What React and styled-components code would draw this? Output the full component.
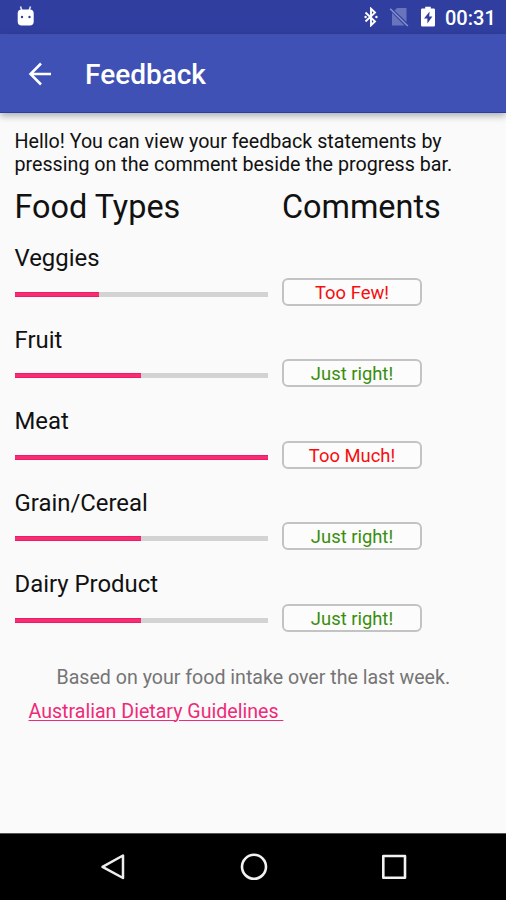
import React from "react";
import styled, { createGlobalStyle } from "styled-components";

const GlobalStyle = createGlobalStyle`
  * { box-sizing: border-box; }
  body { margin: 0; background: #fafafa; font-family: Roboto, "Noto Sans", sans-serif; }
`;

const Screen = styled.div`
  display: flex;
  flex-direction: column;
  width: 506px;
  height: 900px;
  overflow: hidden;
  background: #fafafa;
  color: #111;
`;

const StatusBar = styled.header`
  display: flex;
  align-items: center;
  flex: none;
  height: 34px;
  padding: 0 10px 0 16px;
  background: #303f9f;
  color: #fff;
`;

const StatusIcons = styled.div`
  display: flex;
  align-items: center;
  gap: 11px;
  margin-left: auto;
`;

const Clock = styled.span`
  width: 51px;
  margin: 2px 0 0 -2px;
  font-size: 20px;
  font-weight: 500;
  line-height: 34px;
  white-space: nowrap;
`;

const AppBar = styled.nav`
  display: flex;
  align-items: center;
  flex: none;
  height: 79px;
  padding-left: 28px;
  background: #3f51b5;
  border-bottom: 1px solid #2740a6;
  box-shadow: 0 3px 7px rgba(0, 0, 0, 0.3);
  color: #fff;
`;

const BackButton = styled.button`
  display: flex;
  margin-top: 1px;
  padding: 0;
  border: 0;
  background: none;
`;

const Title = styled.h1`
  margin: 4px 0 0 33px;
  font-size: 28px;
  font-weight: 500;
  line-height: 34px;
`;

const Content = styled.main`
  flex: 1;
  padding: 17px 0 0 14.5px;
`;

const Intro = styled.p`
  margin: 0;
  font-size: 19.68px;
  line-height: 23px;
  white-space: nowrap;
`;

const Columns = styled.div`
  display: grid;
  grid-template-columns: 253px 140px;
  column-gap: 14.5px;
`;

const Heading = styled.h2`
  margin: 11px 0 0;
  font-size: 32.4px;
  font-weight: 400;
  line-height: 40px;
  white-space: nowrap;
`;

const FoodRow = styled(Columns)`
  height: 81.5px;
  align-items: start;
`;

const Food = styled.div`
  padding-top: 16px;
`;

const FoodName = styled.div`
  height: 30px;
  font-size: 23.9px;
  line-height: 30px;
`;

const Track = styled.div`
  height: 5px;
  margin-top: 18.8px;
  background: #d3d3d3;
`;

const Fill = styled.div`
  height: 5px;
  background: #f62d74;
  border: solid #ef1b66;
  border-width: 1px 0;
`;

const Comment = styled.button`
  height: 28px;
  margin-top: 50.8px;
  padding: 1px 0 0;
  border: 2px solid #c3c3c3;
  border-radius: 6px;
  background: #fcfcfc;
  color: ${(p) => (p.$good ? "#388e0c" : "#f80d0d")};
  font: 400 18.4px/23px Roboto, sans-serif;
`;

const Basis = styled.p`
  margin: 31px 0 0 42px;
  font-size: 19.6px;
  line-height: 24px;
  color: #757575;
  white-space: nowrap;
`;

const GuideLink = styled.a`
  display: block;
  width: max-content;
  margin: 10px 0 0 14px;
  color: #ee2b78;
  font-size: 19.6px;
  line-height: 24px;
  text-decoration: underline;
  text-decoration-thickness: 1px;
  text-underline-offset: 2px;
  white-space: pre;
`;

const NavBar = styled.footer`
  display: flex;
  align-items: center;
  justify-content: space-between;
  flex: none;
  height: 67px;
  padding: 0 97px 0 98px;
  background: #000;
  border-top: 1px solid #555;
`;

const foods = [
  { name: "Veggies", value: 33.3, comment: "Too Few!", good: false },
  { name: "Fruit", value: 50, comment: "Just right!", good: true },
  { name: "Meat", value: 100, comment: "Too Much!", good: false },
  { name: "Grain/Cereal", value: 50, comment: "Just right!", good: true },
  { name: "Dairy Product", value: 50, comment: "Just right!", good: true },
];

export default function App() {
  return (
    <Screen>
      <GlobalStyle />
      <StatusBar>
        <svg width="20" height="24" viewBox="0 0 20 24">
          <path d="M4.500 1.500 6 6M14.500 1.500 13 6" stroke="#dfe3ff" strokeWidth="1.600" />
          <rect x="1.700" y="4.500" width="16" height="16" rx="4" fill="#fff" />
          <circle cx="6" cy="12" r="1.200" fill="#303f9f" />
          <circle cx="13.500" cy="12" r="1.200" fill="#303f9f" />
        </svg>
        <StatusIcons>
          <svg width="14" height="20" viewBox="0 0 14 20">
            <path d="M1.500 5.500 11 14.500 7 18.300V1.700L11 5.500 1.500 14.500" fill="none" stroke="#fff" strokeWidth="1.900" />
            <circle cx="1.600" cy="10" r="1.200" fill="#fff" />
            <circle cx="12.400" cy="10" r="1.200" fill="#fff" />
          </svg>
          <svg width="20" height="20" viewBox="0 0 20 20">
            <path d="M8 1H17.500V15L5.500 3.500zM3 5.700 15.500 18.500H3z" fill="#6974bc" />
            <path d="M1.200 1.800 18.800 19" stroke="#8690cd" strokeWidth="1.600" />
          </svg>
          <svg width="16" height="22" viewBox="0 0 16 22">
            <path d="M2.200 2.500h3V.800h5.600v1.700h3q1.200 0 1.200 1.200v15.600q0 1.200-1.200 1.200H2.200q-1.200 0-1.200-1.200V3.700q0-1.200 1.200-1.200z" fill="#fff" />
            <path d="M9.600 5.500 4 12.500h3.400V17.500L12.400 10.500H9.200z" fill="#303f9f" />
          </svg>
          <Clock>00:31</Clock>
        </StatusIcons>
      </StatusBar>
      <AppBar>
        <BackButton aria-label="Back">
          <svg width="24" height="24" viewBox="0 0 24 24" fill="none" stroke="#fff" strokeWidth="2.500">
            <path d="M23 12H2.500M13 1.500 2.500 12l10.500 10.500" />
          </svg>
        </BackButton>
        <Title>Feedback</Title>
      </AppBar>
      <Content>
        <Intro>
          Hello! You can view your feedback statements by
          <br />
          pressing on the comment beside the progress bar.
        </Intro>
        <Columns>
          <Heading>Food Types</Heading>
          <Heading>Comments</Heading>
        </Columns>
        {foods.map((f) => (
          <FoodRow key={f.name}>
            <Food>
              <FoodName>{f.name}</FoodName>
              <Track>
                <Fill style={{ width: `${f.value}%` }} />
              </Track>
            </Food>
            <Comment $good={f.good}>{f.comment}</Comment>
          </FoodRow>
        ))}
        <Basis>Based on your food intake over the last week.</Basis>
        <GuideLink href="#">{"Australian Dietary Guidelines "}</GuideLink>
      </Content>
      <NavBar>
        <svg width="30" height="30" viewBox="0 0 30 30" fill="none" stroke="#eee" strokeWidth="2.500" strokeLinejoin="round">
          <path d="M25 3.500V26L4.500 14.800z" />
        </svg>
        <svg width="30" height="30" viewBox="0 0 30 30" fill="none" stroke="#f2f2f2" strokeWidth="2.600">
          <circle cx="15" cy="14.800" r="12" />
        </svg>
        <svg width="30" height="30" viewBox="0 0 30 30" fill="none" stroke="#f2f2f2" strokeWidth="2.600" strokeLinejoin="round">
          <rect x="4.300" y="4" width="21.700" height="21.700" />
        </svg>
      </NavBar>
    </Screen>
  );
}
